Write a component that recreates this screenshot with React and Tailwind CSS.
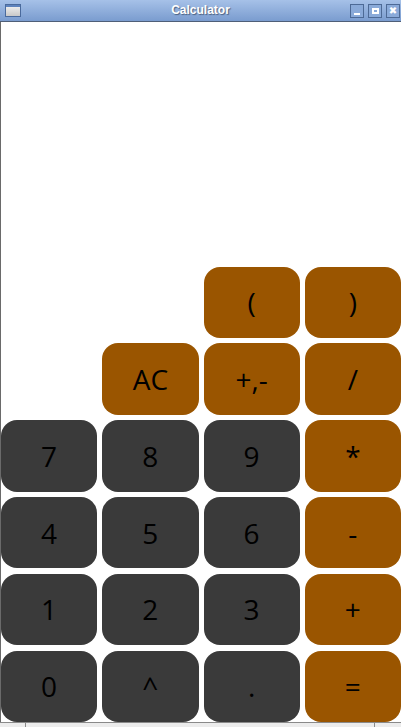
import React from "react";

const rows = [
  [null, null, ["(", "o"], [")", "o"]],
  [null, ["AC", "o"], ["+,-", "o"], ["/", "o"]],
  [["7", "d"], ["8", "d"], ["9", "d"], ["*", "o"]],
  [["4", "d"], ["5", "d"], ["6", "d"], ["-", "o"]],
  [["1", "d"], ["2", "d"], ["3", "d"], ["+", "o"]],
  [["0", "d"], ["^", "d"], [".", "d"], ["=", "o"]],
];

function TitleButton({ children }) {
  return (
    <div className="flex h-[14px] w-[14px] items-center justify-center border border-[#4d6a96] bg-[#8aaad9]">
      {children}
    </div>
  );
}

export default function App() {
  return (
    <div className="flex h-[727px] w-[401px] flex-col overflow-hidden bg-white" style={{ fontFamily: "'Open Sans', sans-serif" }}>
      <div className="relative flex h-[21px] shrink-0 items-center bg-gradient-to-b from-[#a6c1e8] to-[#7a9ccf]">
        <div className="ml-[5px] h-[13px] w-[16px] border border-[#4a6a9c] bg-gradient-to-b from-[#f4f4f4] to-[#c8c8c8] shadow-[inset_0_2px_0_#5e83bd]" />
        <div
          className="absolute inset-x-0 top-[3px] text-center text-[12px] font-bold leading-[15px] text-white [text-shadow:1px_1px_1px_#4a6080]"
          style={{ fontFamily: "'Liberation Sans', sans-serif" }}
        >
          Calculator
        </div>
        <div className="ml-auto mr-px flex gap-[4px]">
          <TitleButton>
            <div className="mt-[6px] h-[2px] w-[6px] bg-white" />
          </TitleButton>
          <TitleButton>
            <div className="h-[6px] w-[7px] border-2 border-white" />
          </TitleButton>
          <TitleButton>
            <span className="text-[10px] font-bold leading-none text-white" style={{ fontFamily: "'DejaVu Sans', sans-serif" }}>
              ✖
            </span>
          </TitleButton>
        </div>
      </div>
      <div className="h-px shrink-0 bg-[#4f5f78]" />
      <div className="flex flex-1 border-l border-[#6a6a6a]">
        <div className="flex flex-1 flex-col justify-end">
          <div className="grid grid-cols-4 gap-x-[5px] gap-y-[5.3px]">
            {rows.flat().map((b, i) =>
              b ? (
                <button
                  key={i}
                  type="button"
                  className={`flex h-[71.5px] items-center justify-center rounded-[16px] text-[28px] text-black ${
                    b[1] === "o" ? "bg-[#9a5500]" : "bg-[#3a3a3a]"
                  }`}
                >
                  {b[0]}
                </button>
              ) : (
                <div key={i} />
              )
            )}
          </div>
        </div>
      </div>
      <div className="h-px shrink-0 bg-[#8a8a8a]" />
      <div className="flex h-[4px] shrink-0 bg-[#ececec]">
        <div className="w-[26px] border-r border-[#8a8a8a]" />
        <div className="w-[349px] border-r border-[#8a8a8a]" />
      </div>
    </div>
  );
}
